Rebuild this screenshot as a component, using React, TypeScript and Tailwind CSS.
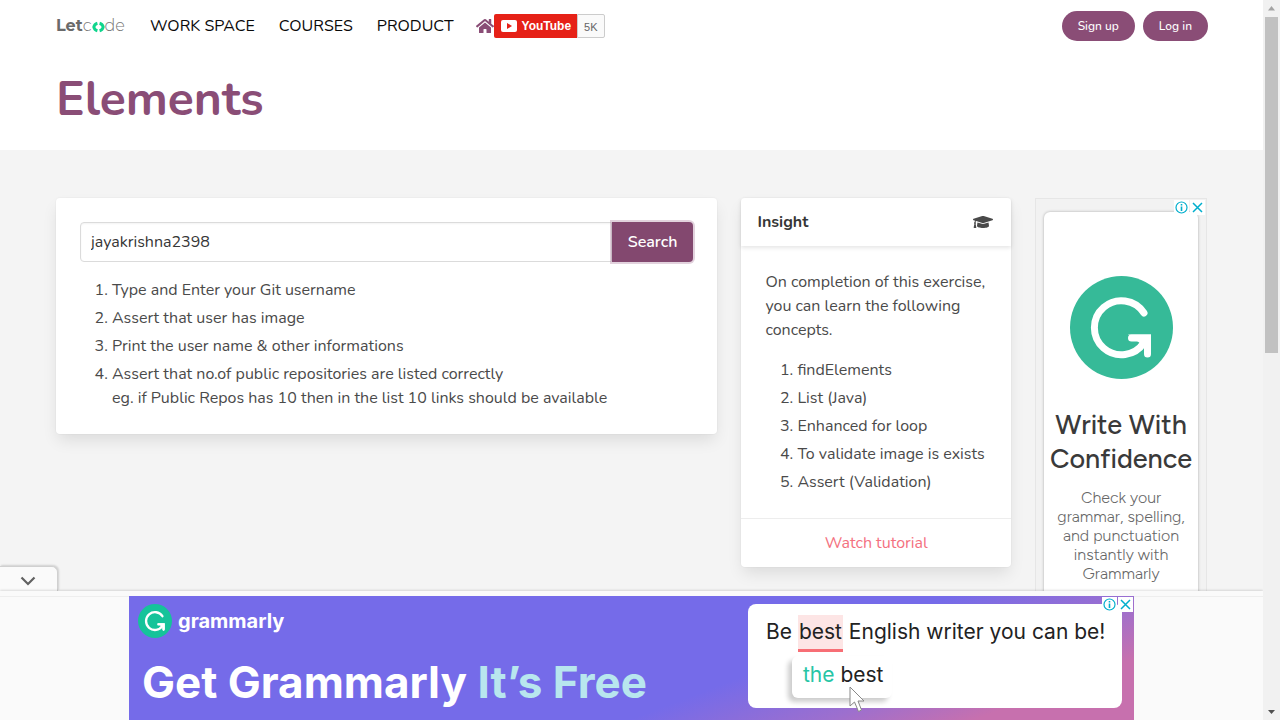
import { FaHome, FaGraduationCap } from "react-icons/fa";

const exerciseSteps = [
  "Type and Enter your Git username",
  "Assert that user has image",
  "Print the user name & other informations",
  "Assert that no.of public repositories are listed correctly\neg. if Public Repos has 10 then in the list 10 links should be available",
];

const concepts = [
  "findElements",
  "List (Java)",
  "Enhanced for loop",
  "To validate image is exists",
  "Assert (Validation)",
];

function LetcodeLogo() {
  return (
    <a href="#" aria-label="Letcode" className="flex items-center font-[Montserrat,Lato,sans-serif] text-base leading-6">
      <span className="font-bold text-[#6a6a6a]">Let</span>
      <span className="font-light text-[#777]">c</span>
      <svg width="13" height="12" viewBox="0 0 13 12" className="mt-0.5" fill="none" stroke="#10d58d" strokeWidth="3">
        <path d="M5.400 2.200C3.200 2.800 2.200 4.200 1.800 6C2.200 7.800 3.200 9.200 5.400 9.800M7.600 2.200C9.800 2.800 10.800 4.200 11.200 6C10.800 7.800 9.800 9.200 7.600 9.800" />
      </svg>
      <span className="font-light text-[#777]">de</span>
    </a>
  );
}

function GrammarlyMark({ size, color }: { size: number; color: string }) {
  return (
    <svg width={size} height={size} viewBox="0 0 103 103" fill="none" className="shrink-0">
      <circle cx="51.500" cy="51.500" r="51.500" fill={color} />
      <path
        d="M74 37A27 27 0 1 0 74 66.500"
        stroke="#fff"
        strokeWidth="7"
        strokeLinecap="round"
      />
      <path d="M61.500 62H77.500V78" stroke="#fff" strokeWidth="7" strokeLinecap="round" />
      <path d="M58 58.500H81V78H74V70Z" fill="#fff" />
    </svg>
  );
}

function AdBadges() {
  return (
    <div className="absolute right-px top-px flex gap-px">
      <button aria-label="Ad information" className="flex size-[15px] items-center justify-center bg-white">
        <svg width="13" height="13" viewBox="0 0 13 13" fill="none" stroke="#00aecd">
          <circle cx="6.500" cy="6.500" r="5.500" strokeWidth="1.200" />
          <path d="M6.500 5.500V10M6.500 3V4.500" strokeWidth="1.600" />
        </svg>
      </button>
      <button aria-label="Close ad" className="flex size-[15px] items-center justify-center bg-white">
        <svg width="11" height="11" viewBox="0 0 11 11" stroke="#00aecd" strokeWidth="1.500">
          <path d="M1 1L10 10M10 1L1 10" />
        </svg>
      </button>
    </div>
  );
}

function Navbar() {
  return (
    <nav className="flex h-[52px] items-center justify-between">
      <div className="flex items-center">
        <div className="w-[94px]">
          <LetcodeLogo />
        </div>
        <div className="flex gap-6 text-base text-[#0a0a0a]">
          <a href="#">WORK SPACE</a>
          <a href="#">COURSES</a>
          <a href="#">PRODUCT</a>
        </div>
        <a href="#" aria-label="Home" className="ml-[22px] text-[#8a4d76]">
          <FaHome size={18} />
        </a>
        <div className="flex h-6 font-['Liberation_Sans',Arial,sans-serif] text-xs">
          <a href="#" className="flex items-center gap-[5px] rounded-l-xs bg-[#e62117] px-[7px] pr-1.5 font-bold text-white">
            <svg width="16" height="12" viewBox="0 0 16 12">
              <rect width="16" height="12" rx="2" fill="#fff" />
              <path d="M6 3L11 6L6 9Z" fill="#e62117" />
            </svg>
            YouTube
          </a>
          <span className="flex items-center rounded-r-xs border border-[#ccc] bg-[#fafafa] px-1.5 pt-0.5 text-[11px] text-[#666]">
            5K
          </span>
        </div>
      </div>
      <div className="flex gap-2 text-xs font-medium text-white">
        <button className="h-[30px] rounded-full bg-[#8a4d76] px-4">Sign up</button>
        <button className="h-[30px] rounded-full bg-[#8a4d76] px-4">Log in</button>
      </div>
    </nav>
  );
}

function ExerciseCard() {
  return (
    <section className="col-span-7 rounded-sm bg-white p-6 shadow-[0_8px_16px_-2px_rgba(10,10,10,0.1),0_0_0_1px_rgba(10,10,10,0.02)]">
      <form className="flex" onSubmit={(event) => event.preventDefault()}>
        <input
          type="text"
          aria-label="Git username"
          defaultValue="jayakrishna2398"
          className="h-10 min-w-0 flex-1 rounded-l-sm border border-[#dbdbdb] bg-white px-2.5 text-[#363636] shadow-[inset_0_1px_2px_rgba(10,10,10,0.05)] outline-none"
        />
        <button className="h-10 rounded-r-sm bg-[#83486f] px-4 font-semibold text-white shadow-[0_0_0_2px_rgba(138,77,118,0.25)]">
          Search
        </button>
      </form>
      <ol className="mt-4 flex list-decimal flex-col gap-1 pl-8">
        {exerciseSteps.map((step) => (
          <li key={step} className="whitespace-pre-line">
            {step}
          </li>
        ))}
      </ol>
    </section>
  );
}

function InsightCard() {
  return (
    <section className="col-span-3 rounded-sm bg-white shadow-[0_8px_16px_-2px_rgba(10,10,10,0.1),0_0_0_1px_rgba(10,10,10,0.02)]">
      <header className="flex items-center justify-between px-4 py-3 shadow-[0_2px_4px_rgba(10,10,10,0.1)]">
        <h2 className="font-bold text-[#363636]">Insight</h2>
        <FaGraduationCap size={20} className="mr-0.5" />
      </header>
      <div className="p-6">
        <p>On completion of this exercise, you can learn the following concepts.</p>
        <ol className="mt-4 flex list-decimal flex-col gap-1 pl-8">
          {concepts.map((concept) => (
            <li key={concept}>{concept}</li>
          ))}
        </ol>
      </div>
      <footer className="border-t border-[#ededed] py-3 text-center">
        <a href="#" className="text-[#f4717f]">
          Watch tutorial
        </a>
      </footer>
    </section>
  );
}

function SideAd() {
  return (
    <aside className="relative col-span-2 border border-[#e6e6e6] bg-[#f2f2f2] px-2 pt-[13px] font-[Figtree,Outfit,Lato,sans-serif]">
      <div className="flex min-h-[520px] flex-col items-center rounded-md bg-white pt-16 text-center shadow-[0_0_3px_rgba(0,0,0,0.3)]">
        <GrammarlyMark size={103} color="#36ba98" />
        <h3 className="mt-[29px] text-[27px] font-medium leading-[34px] text-[#3a3a3a]">
          Write With Confidence
        </h3>
        <p className="mt-3 px-3 text-base font-light leading-[19px] text-[#666]">
          Check your grammar, spelling, and punctuation instantly with Grammarly
        </p>
      </div>
      <AdBadges />
    </aside>
  );
}

function AnchorAd() {
  return (
    <div className="absolute inset-x-0 bottom-0">
      <button
        aria-label="Collapse ad"
        className="flex h-[25px] w-[58px] items-center justify-center rounded-tr-md border-r border-t border-[#d0d0d0] bg-[#fafafa] pr-px pt-1 shadow-[1px_-1px_2px_rgba(0,0,0,0.15)]"
      >
        <svg width="16" height="10" viewBox="0 0 16 10" fill="none" stroke="#616161" strokeWidth="2.200">
          <path d="M1.500 1.500L8 8L14.500 1.500" />
        </svg>
      </button>
      <div className="relative bg-[#fafafa] pt-[5px] shadow-[0_-1px_2px_rgba(0,0,0,0.12)]">
        <div className="border-t border-[#eeeeee]">
          <div className="relative mx-auto -mt-px flex h-[124px] max-w-[1005px] justify-between overflow-hidden bg-[linear-gradient(159deg,#756be9_0%,#756be9_62%,#9d6fce_77%,#c770ae_88%)] pl-[9px] pr-3 font-[Inter,sans-serif]">
            <div>
              <div className="flex items-center gap-1.5 pt-2 text-xl font-bold text-white">
                <GrammarlyMark size={34} color="#15c39a" />
                <span className="leading-8">grammarly</span>
              </div>
              <p className="mt-4 pl-1 text-[44px] font-bold leading-[56px] text-white">
                Get Grammarly <span className="text-[#b8e6ee]">It’s Free</span>
              </p>
            </div>
            <div className="relative mt-2 h-[104px] w-[374px] rounded-lg bg-white px-[18px] pt-[11px] text-[21px] text-[#222]">
              <p className="whitespace-nowrap leading-[34px]">
                Be <span className="inline-block border-b-[3px] border-[#f76e75] bg-[#fde5e5] px-px">best</span> English writer you can be!
              </p>
              <div className="ml-[26px] mt-1 w-[100px] rounded-md bg-white pb-2 pl-[11px] pt-1 leading-[30px] shadow-[-4px_4px_5px_rgba(0,0,0,0.2)]">
                <span className="text-[#27c5a5]">the</span> best
              </div>
              <svg width="16" height="27" viewBox="0 0 16 27" className="absolute left-[101px] top-[82px]" fill="#fff" stroke="#888">
                <path d="M1 1V20L5.500 16L9.500 25.500L12.500 24L9 15H15Z" />
              </svg>
            </div>
            <AdBadges />
          </div>
        </div>
      </div>
    </div>
  );
}

function ScrollTrack() {
  return (
    <div className="flex w-[17px] shrink-0 flex-col items-center bg-[#f1f1f1]">
      <svg width="17" height="17" viewBox="0 0 17 17" className="shrink-0">
        <path d="M8.500 6L12 10.500H5Z" fill="#a3a3a3" />
      </svg>
      <div className="h-[336px] w-[13px] bg-[#c1c1c1]" />
      <svg width="17" height="17" viewBox="0 0 17 17" className="mt-auto shrink-0">
        <path d="M8.500 11L12 7H5Z" fill="#505050" />
      </svg>
    </div>
  );
}

export default function App() {
  return (
    <div className="flex h-screen overflow-hidden bg-[#f4f4f4] font-[Nunito,Lato,sans-serif] text-base leading-6 text-[#4a4a4a]">
      <div className="relative min-w-0 flex-1 overflow-hidden">
        <header className="bg-white pl-14 pr-[55px] pb-[17px]">
          <Navbar />
          <h1 className="pt-[13px] text-5xl font-bold leading-[68px] text-[#8a4d76]">Elements</h1>
        </header>
        <main className="grid grid-cols-12 items-start gap-6 px-14 py-12">
          <ExerciseCard />
          <InsightCard />
          <SideAd />
        </main>
        <AnchorAd />
      </div>
      <ScrollTrack />
    </div>
  );
}
